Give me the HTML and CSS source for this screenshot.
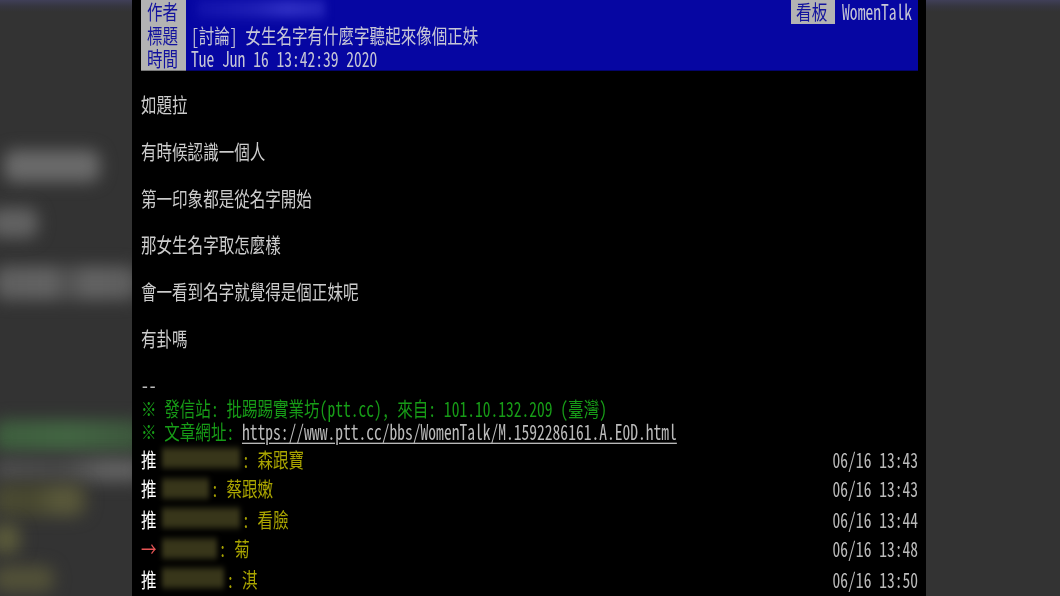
FILE: index.html
```html
<!DOCTYPE html>
<html lang="zh-Hant">
<head>
<meta charset="utf-8">
<title>[討論] 女生名字有什麼字聽起來像個正妹 - WomenTalk</title>
<link rel="stylesheet" href="styles.css">
</head>
<body>
<div class="screen">
  <aside class="side side-left">
    <div class="blob b1"></div>
    <div class="blob b2"></div>
    <div class="blob b3"></div>
    <div class="blob b4"></div>
    <div class="blob b5"></div>
    <div class="blob b6"></div>
    <div class="blob b7"></div>
    <div class="blob b8"></div>
  </aside>
  <main class="panel">
    <div class="term">
      <div class="meta">
        <div class="meta-row">
          <span class="tag">作者</span>
          <span class="val val-author"><span class="redact-author"></span></span>
          <span class="tag tag-board">看板</span>
          <span class="val val-board">WomenTalk</span>
        </div>
        <div class="meta-row">
          <span class="tag">標題</span>
          <span class="val">[討論] 女生名字有什麼字聽起來像個正妹</span>
        </div>
        <div class="meta-row">
          <span class="tag">時間</span>
          <span class="val">Tue Jun 16 13:42:39 2020</span>
        </div>
      </div>
      <div class="content">
        <div class="line"></div>
        <div class="line">如題拉</div>
        <div class="line"></div>
        <div class="line">有時候認識一個人</div>
        <div class="line"></div>
        <div class="line">第一印象都是從名字開始</div>
        <div class="line"></div>
        <div class="line">那女生名字取怎麼樣</div>
        <div class="line"></div>
        <div class="line">會一看到名字就覺得是個正妹呢</div>
        <div class="line"></div>
        <div class="line">有卦嗎</div>
        <div class="line"></div>
        <div class="line sig-sep">--</div>
        <div class="line green">※ 發信站: 批踢踢實業坊(ptt.cc), 來自: 101.10.132.209 (臺灣)</div>
        <div class="line green">※ 文章網址: <a class="link" href="#">https://www.ptt.cc/bbs/WomenTalk/M.1592286161.A.E0D.html</a></div>
      </div>
      <div class="pushes">
        <div class="push">
          <span class="push-tag">推</span>
          <span class="push-user u10"></span>
          <span class="push-content">: 森跟寶</span>
          <span class="push-time">06/16 13:43</span>
        </div>
        <div class="push">
          <span class="push-tag">推</span>
          <span class="push-user u6"></span>
          <span class="push-content">: 蔡跟嫩</span>
          <span class="push-time">06/16 13:43</span>
        </div>
        <div class="push">
          <span class="push-tag">推</span>
          <span class="push-user u10"></span>
          <span class="push-content">: 看臉</span>
          <span class="push-time">06/16 13:44</span>
        </div>
        <div class="push">
          <span class="push-tag arrow">→</span>
          <span class="push-user u7"></span>
          <span class="push-content">: 菊</span>
          <span class="push-time">06/16 13:48</span>
        </div>
        <div class="push">
          <span class="push-tag">推</span>
          <span class="push-user u8"></span>
          <span class="push-content">: 淇</span>
          <span class="push-time">06/16 13:50</span>
        </div>
      </div>
    </div>
  </main>
  <aside class="side side-right"></aside>
</div>
</body>
</html>
```
FILE: styles.css
```css
html, body {
  margin: 0;
  padding: 0;
}
body {
  width: 1060px;
  height: 596px;
  overflow: hidden;
  background: linear-gradient(#403f58 0, #363640 6px, #333333 12px, #333333 100%);
}
.screen {
  display: flex;
  height: 596px;
}

/* blurred background copy on the left */
.side-left {
  width: 132px;
  flex: none;
  display: flex;
  flex-direction: column;
  overflow: hidden;
}
.blob {
  flex: none;
  filter: blur(8px);
  border-radius: 10px;
}
.b1 { margin-top: 150px; margin-left: 4px; width: 96px; height: 32px; background: #6a6a6a; }
.b2 { margin-top: 26px; margin-left: -10px; width: 48px; height: 30px; background: #626262; }
.b3 { margin-top: 28px; margin-left: -6px; width: 144px; height: 34px; background: linear-gradient(90deg, #5e5e5e 0, #646464 40%, #4e4e4e 50%, #646464 65%, #5c5c5c 100%); }
.b4 { margin-top: 120px; margin-left: -6px; width: 150px; height: 32px; background: linear-gradient(90deg, #3e5e3e, #436643 50%, #3c563c); }
.b5 { margin-top: 6px; margin-left: -6px; width: 150px; height: 24px; background: linear-gradient(90deg, #4e4e4e, #484848 45%, #626262 75%, #5e5e5e); }
.b6 { margin-top: 2px; margin-left: -6px; width: 92px; height: 32px; background: linear-gradient(90deg, #4c4c34, #47472f 40%, #5c5b3c 75%, #4f4e35); }
.b7 { margin-top: 8px; margin-left: -8px; width: 28px; height: 30px; background: #5a5a3a; }
.b8 { margin-top: 12px; margin-left: -6px; width: 60px; height: 26px; background: #525138; }

.side-right {
  flex: 1;
}

/* terminal panel */
.panel {
  width: 794px;
  flex: none;
  height: 596px;
  background: #000;
  overflow: hidden;
}
.term {
  width: 777px;
  padding-left: 9px;
  transform: scaleY(1.3333);
  transform-origin: 0 0;
  font-family: "Noto Sans Mono CJK TC", "Noto Sans CJK TC", monospace;
  font-size: 15.54px;
  line-height: 17.5px;
  color: #cccccc;
}

.meta {
  background: linear-gradient(90deg, #b3b3b3 0, #b3b3b3 45px, #0606a2 45px, #0606a2 100%);
}
.meta-row {
  display: flex;
  height: 17.5px;
  white-space: pre;
}
.tag {
  flex: none;
  width: 45px;
  box-sizing: border-box;
  padding-left: 6px;
  color: #12129e;
}
.val {
  flex: 1;
  padding-left: 5px;
  color: #c6c6d6;
}
.val-author {
  display: flex;
  align-items: flex-start;
}
.redact-author {
  display: block;
  margin-left: 6px;
  width: 128px;
  height: 13px;
  background: linear-gradient(90deg, #1212ac, #2020b6 45%, #3030c4 70%, #2424ba);
  filter: blur(4px);
}
.tag-board {
  width: 44px;
  padding-left: 5px;
  background: #b3b3b3;
}
.val-board {
  flex: none;
  padding: 0 6px 0 7px;
}

.line {
  height: 17.5px;
  white-space: pre;
}
.sig-sep {
  color: #bbbbbb;
}
.green {
  color: #179c17;
}
.link {
  color: #bbbbbb;
  text-decoration: underline;
  text-underline-offset: 2px;
}

.push {
  display: flex;
  height: 22.5px;
  line-height: 22.5px;
  white-space: pre;
}
.push-tag {
  flex: none;
  width: 23.3px;
  color: #ffffff;
}
.push-tag.arrow {
  color: #e65555;
}
.push-user {
  flex: none;
  display: flex;
  align-items: center;
}
.push-user::before {
  content: "";
  display: block;
  width: 100%;
  height: 15px;
  margin-left: -2px;
  background: #38361a;
  filter: blur(2.5px);
}
.u6 { width: 46.6px; }
.u7 { width: 54.4px; }
.u8 { width: 62.2px; }
.u10 { width: 77.7px; }
.push-content {
  color: #aaa500;
}
.push-time {
  margin-left: auto;
  color: #bbbbbb;
}
```
